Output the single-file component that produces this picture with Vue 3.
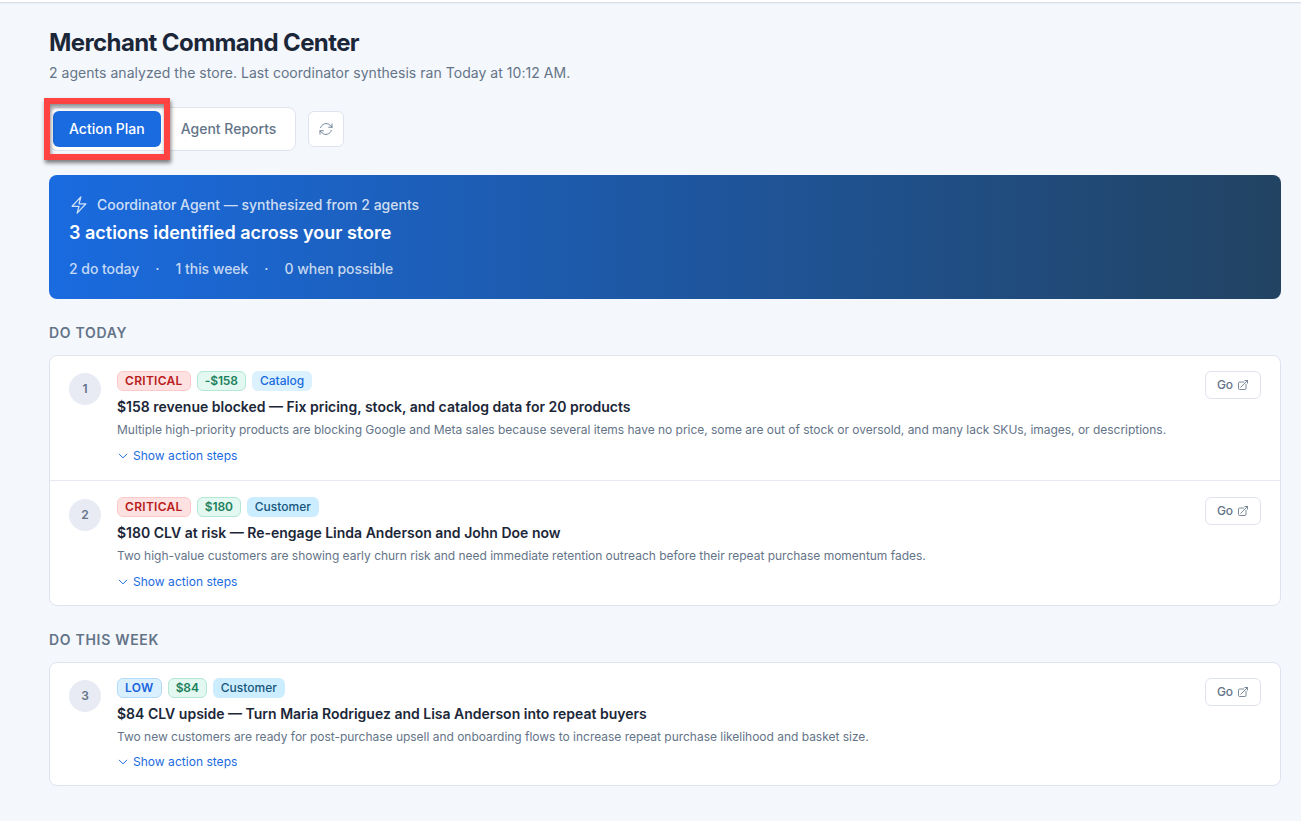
<script setup>
import { ref } from "vue";

const activeTab = ref("plan");

const tabs = [
  { id: "plan", label: "Action Plan" },
  { id: "reports", label: "Agent Reports" },
];

const stats = ["2 do today", "1 this week", "0 when possible"];

const groups = [
  {
    title: "DO TODAY",
    items: [
      {
        id: 1,
        level: "CRITICAL",
        amount: "-$158",
        agent: "Catalog",
        title: "$158 revenue blocked — Fix pricing, stock, and catalog data for 20 products",
        text: "Multiple high-priority products are blocking Google and Meta sales because several items have no price, some are out of stock or oversold, and many lack SKUs, images, or descriptions.",
      },
      {
        id: 2,
        level: "CRITICAL",
        amount: "$180",
        agent: "Customer",
        title: "$180 CLV at risk — Re-engage Linda Anderson and John Doe now",
        text: "Two high-value customers are showing early churn risk and need immediate retention outreach before their repeat purchase momentum fades.",
      },
    ],
  },
  {
    title: "DO THIS WEEK",
    items: [
      {
        id: 3,
        level: "LOW",
        amount: "$84",
        agent: "Customer",
        title: "$84 CLV upside — Turn Maria Rodriguez and Lisa Anderson into repeat buyers",
        text: "Two new customers are ready for post-purchase upsell and onboarding flows to increase repeat purchase likelihood and basket size.",
      },
    ],
  },
];
</script>

<template>
  <div class="page">
    <div class="topbar"></div>
    <main class="content">
      <h1>Merchant Command Center</h1>
      <p class="subtitle">
        2 agents analyzed the store. Last coordinator synthesis ran Today at 10:12 AM.
      </p>

      <div class="toolbar">
        <div class="tabs">
          <button
            v-for="tab in tabs"
            :key="tab.id"
            class="tab"
            :class="{ active: activeTab == tab.id }"
            @click="activeTab = tab.id"
          >
            {{ tab.label }}
          </button>
          <div class="highlight"></div>
        </div>
        <button class="refresh" aria-label="Refresh">
          <svg width="16" height="16" viewBox="0 0 24 24">
            <path d="M16.02 9.35h5v0M2.98 19.64v-5h5M2.98 14.65l3.18 3.18a8.25 8.25 0 0 0 13.8-3.7M4.03 9.87a8.25 8.25 0 0 1 13.8-3.7l3.18 3.18M21.01 4.36v4.99" />
          </svg>
        </button>
      </div>

      <section class="banner">
        <div class="banner-label">
          <svg width="20" height="20" viewBox="0 0 24 24">
            <path d="M3.75 13.5l10.5-11.25L12 10.5h8.25L9.75 21.75 12 13.5z" />
          </svg>
          <span>Coordinator Agent — synthesized from 2 agents</span>
        </div>
        <h2>3 actions identified across your store</h2>
        <div class="stats">
          <template v-for="(stat, i) in stats" :key="stat">
            <span v-if="i > 0" class="dot">·</span>
            <span>{{ stat }}</span>
          </template>
        </div>
      </section>

      <section v-for="group in groups" :key="group.title" class="group">
        <h3>{{ group.title }}</h3>
        <div class="card">
          <article v-for="item in group.items" :key="item.id" class="item">
            <div class="number">{{ item.id }}</div>
            <div class="body">
              <div class="badges">
                <span class="badge level" :class="item.level.toLowerCase()">{{ item.level }}</span>
                <span class="badge amount">{{ item.amount }}</span>
                <span class="badge agent" :class="item.agent.toLowerCase()">{{ item.agent }}</span>
              </div>
              <h4>{{ item.title }}</h4>
              <p class="text">{{ item.text }}</p>
              <button class="steps">
                <svg width="12" height="12" viewBox="0 0 24 24">
                  <path d="M19.5 8.25l-7.5 7.5-7.5-7.5" />
                </svg>
                <span>Show action steps</span>
              </button>
            </div>
            <button class="go">
              <span>Go</span>
              <svg width="12" height="12" viewBox="0 0 24 24">
                <path d="M13.5 6H5.25A2.25 2.25 0 0 0 3 8.25v10.5A2.25 2.25 0 0 0 5.25 21h10.5A2.25 2.25 0 0 0 18 18.75V10.5M7.5 16.5L21 3M15.75 3H21v5.25" />
              </svg>
            </button>
          </article>
        </div>
      </section>
    </main>
  </div>
</template>

<style>
body {
  margin: 0;
  background: #f4f7fc;
}
</style>

<style scoped>
.page {
  min-height: 821px;
  background: #f4f7fc;
  font-family: Inter, "Liberation Sans", sans-serif;
  color: #1b2738;
}

.topbar {
  height: 2px;
  background: #fff;
  border-bottom: 1px solid #dcdfeb;
  box-shadow: 0 1px 1px rgba(30, 50, 90, 0.05);
}

.content {
  padding: 24px 20px 0 49px;
}

h1,
h2,
h3,
h4,
p {
  margin: 0;
}

h1 {
  font-size: 24px;
  line-height: 32px;
  font-weight: 700;
  letter-spacing: -0.6px;
}

.subtitle {
  margin-top: 4px;
  font-size: 14px;
  line-height: 20px;
  letter-spacing: 0.035px;
  color: #647488;
}

button {
  font-family: inherit;
  border: none;
  background: none;
  padding: 0;
  cursor: pointer;
}

svg {
  display: block;
  flex: none;
  fill: none;
  stroke: currentColor;
  stroke-width: 1.5;
  stroke-linecap: round;
  stroke-linejoin: round;
}

.toolbar {
  display: flex;
  align-items: center;
  gap: 12px;
  margin-top: 24px;
}

.tabs {
  position: relative;
  display: flex;
  gap: 4px;
  padding: 3px;
  border: 1px solid #dfe3ee;
  border-radius: 8px;
  background: #fff;
}

.tab {
  height: 36px;
  padding: 0 16px 1px;
  border-radius: 6px;
  font-size: 14px;
  line-height: 20px;
  font-weight: 500;
  color: #647488;
}

.tab.active {
  background: #1a6be0;
  color: #fff;
}

.highlight {
  position: absolute;
  left: -6px;
  top: -10px;
  width: 114px;
  height: 50px;
  border: 6px solid #ff4343;
  box-shadow: 1px 3px 4px rgba(0, 0, 0, 0.5), inset 1px 3px 4px rgba(0, 0, 0, 0.45);
  pointer-events: none;
}

.refresh {
  display: flex;
  align-items: center;
  justify-content: center;
  width: 36px;
  height: 36px;
  border: 1px solid #dfe3ee;
  border-radius: 6px;
  background: #fff;
  color: #72849b;
}

.banner {
  box-sizing: border-box;
  height: 124px;
  margin-top: 24px;
  padding: 20px;
  border-radius: 8px;
  background: linear-gradient(90deg, #1a6be0, #224362);
  color: #fff;
}

.banner-label {
  display: flex;
  align-items: center;
  gap: 8px;
  height: 20px;
  font-size: 14px;
  line-height: 20px;
  font-weight: 500;
  color: rgba(255, 255, 255, 0.8);
}

.banner-label span {
  padding-bottom: 1px;
}

h2 {
  margin-top: 4px;
  font-size: 18px;
  line-height: 28px;
  font-weight: 600;
}

.stats {
  display: flex;
  gap: 16px;
  margin-top: 12px;
  font-size: 14px;
  line-height: 20px;
  font-weight: 500;
  letter-spacing: -0.04px;
  color: rgba(255, 255, 255, 0.75);
}

.group {
  margin-top: 24px;
}

h3 {
  font-size: 14px;
  line-height: 20px;
  font-weight: 600;
  letter-spacing: 0.7px;
  color: #647488;
}

.card {
  margin-top: 12px;
  border: 1px solid #dfe3ee;
  border-radius: 8px;
  background: #fff;
}

.item {
  display: flex;
  align-items: flex-start;
  box-sizing: border-box;
  height: 124px;
  padding: 15px 19px;
}

.item + .item {
  height: 125px;
  padding-top: 16px;
  border-top: 1px solid #e6e8f2;
}

.item:only-child {
  height: 122px;
}

.item:only-child .steps {
  margin-top: 7px;
}

.number {
  display: flex;
  align-items: center;
  justify-content: center;
  box-sizing: border-box;
  flex: none;
  width: 32px;
  height: 32px;
  margin: 2px 16px 0 0;
  padding-bottom: 1px;
  border-radius: 50%;
  background: #e8ebf4;
  font-size: 12px;
  font-weight: 600;
  color: #647488;
}

.body {
  flex: 1;
}

.badges {
  display: flex;
  gap: 6px;
}

.badge {
  box-sizing: border-box;
  height: 20px;
  padding: 0 7px;
  border: 1px solid transparent;
  border-radius: 6px;
  font-size: 12px;
  line-height: 18px;
  font-weight: 600;
}

.level {
  letter-spacing: 0.3px;
}

.critical {
  background: #fee2e2;
  border-color: #fcc9ca;
  color: #b91c1c;
}

.low {
  background: #dbf0fe;
  border-color: #b4dcf8;
  color: #1a64dc;
}

.amount {
  background: #e2f8f0;
  border-color: #b2e8d4;
  letter-spacing: -0.1px;
  color: #1c805c;
}

.agent {
  font-weight: 500;
}

.catalog {
  background: #dbf1fe;
  color: #1a6be0;
}

.customer {
  background: #ccedff;
  color: #16567c;
}

h4 {
  margin-top: 6px;
  font-size: 14px;
  line-height: 20px;
  font-weight: 600;
}

.text {
  margin-top: 4px;
  font-size: 12px;
  line-height: 18px;
  letter-spacing: -0.02px;
  white-space: nowrap;
  color: #647488;
}

.steps {
  display: flex;
  align-items: center;
  gap: 4px;
  margin-top: 8px;
  font-size: 12px;
  line-height: 18px;
  letter-spacing: 0.03px;
  color: #1a6be0;
}

.steps svg {
  stroke-width: 2;
}

.go {
  display: flex;
  align-items: center;
  justify-content: center;
  gap: 4px;
  box-sizing: border-box;
  width: 56px;
  height: 28px;
  border: 1px solid #dfe3ee;
  border-radius: 6px;
  background: #fff;
  font-size: 12px;
  font-weight: 500;
  color: #647488;
}

.go span {
  padding-bottom: 1px;
}

.go svg {
  stroke-width: 1.7;
}
</style>
